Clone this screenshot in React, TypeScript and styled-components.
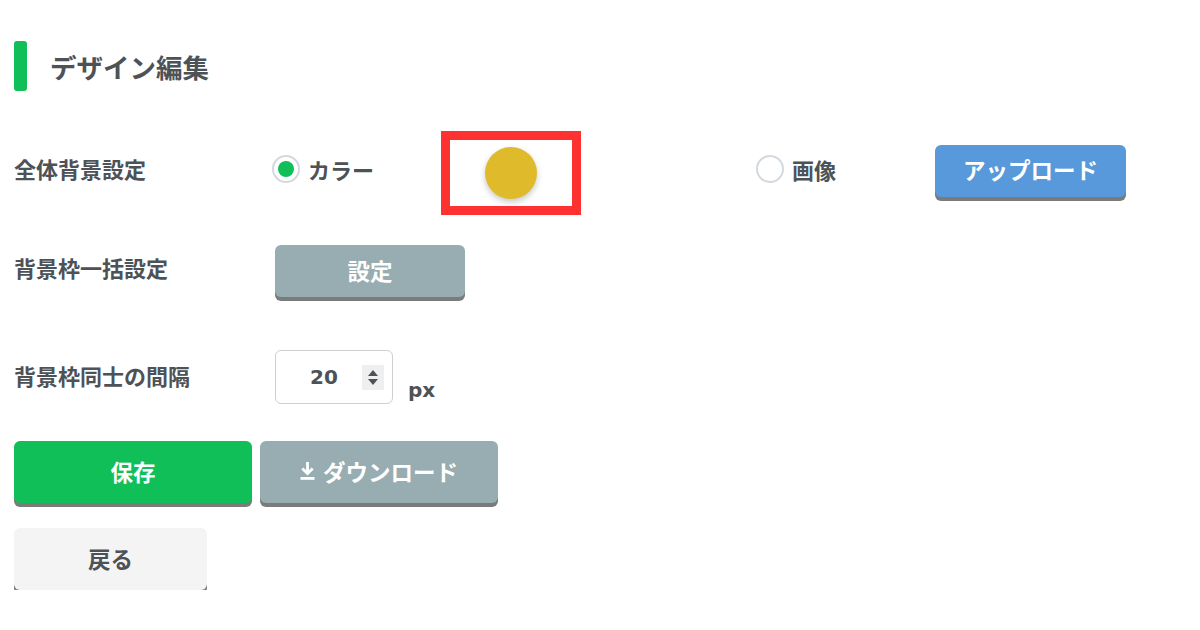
import styled, { createGlobalStyle } from "styled-components";
import { useState } from "react";

const GlobalStyle = createGlobalStyle`
  body {
    margin: 0;
    background: #ffffff;
    font-family: "DejaVu Sans", "Noto Sans CJK JP", sans-serif;
    color: #4d5257;
  }
`;

const Page = styled.div`
  padding: 41px 14px 0 14px;
`;

const Heading = styled.h2`
  display: flex;
  align-items: center;
  gap: 23px;
  margin: 0 0 35px 0;
  font-family: "Noto Sans CJK JP", sans-serif;
  font-size: 26.5px;
  font-weight: 700;
  color: #4d5257;
  height: 50px;

  &::before {
    content: "";
    width: 13px;
    height: 50px;
    border-radius: 3px;
    background: #10bf58;
  }
`;

const Row = styled.div<{ height: number }>`
  display: grid;
  grid-template-columns: 261px 1fr;
  align-items: center;
  height: ${({ height }) => height}px;
`;

const Label = styled.div`
  font-family: "Noto Sans CJK JP", sans-serif;
  font-size: 22px;
  font-weight: 700;
  color: #4d5257;
  padding-bottom: 5px;
`;

const OptionGrid = styled.div`
  display: grid;
  grid-template-columns: 169px 315px 179px auto;
  align-items: center;
  margin-left: -3px;
`;

const RadioLabel = styled.label`
  display: flex;
  align-items: center;
  gap: 8px;
  font-family: "Noto Sans CJK JP", sans-serif;
  font-size: 22px;
  font-weight: 700;
  padding-bottom: 4px;
  cursor: pointer;
`;

const HiddenRadio = styled.input.attrs({ type: "radio" })`
  display: none;
`;

const RadioCircle = styled.span<{ checked: boolean }>`
  width: 28px;
  height: 28px;
  box-sizing: border-box;
  border-radius: 50%;
  border: 2px solid #d3d9de;
  background: #fff;
  display: grid;
  place-items: center;

  &::after {
    content: "";
    width: 16px;
    height: 16px;
    border-radius: 50%;
    background: ${({ checked }) => (checked ? "#10bf58" : "transparent")};
  }
`;

const SwatchFrame = styled.div`
  width: 122px;
  height: 66px;
  margin-top: 5px;
  border: 9px solid #ff3232;
  display: grid;
  place-items: center;
`;

const Swatch = styled.div<{ color: string }>`
  width: 52px;
  height: 52px;
  border-radius: 50%;
  background: ${({ color }) => color};
  box-shadow: 0 3px 6px rgba(0, 0, 0, 0.22);
`;

const Button = styled.button<{ tone: "blue" | "gray" | "green" | "light"; w: number; h: number }>`
  width: ${({ w }) => w}px;
  height: ${({ h }) => h}px;
  border: none;
  border-radius: 6px;
  display: inline-flex;
  align-items: center;
  justify-content: center;
  gap: 8px;
  padding: 0 0 3px 0;
  font-family: "Noto Sans CJK JP", sans-serif;
  font-size: 22.5px;
  font-weight: 700;
  cursor: pointer;
  box-shadow: 0 4px 0 #7b7b7b;
  background: ${({ tone }) =>
    tone === "blue"
      ? "#5899db"
      : tone === "green"
      ? "#10bf58"
      : tone === "light"
      ? "#f4f4f4"
      : "#97adb1"};
  color: ${({ tone }) => (tone === "light" ? "#4d5257" : "#ffffff")};
`;

const ButtonCell = styled.div`
  padding-top: 4px;
`;

const NumberWrap = styled.div`
  display: flex;
  align-items: flex-end;
  gap: 15px;
`;

const NumberBox = styled.div`
  width: 118px;
  height: 54px;
  box-sizing: border-box;
  border: 1px solid #cfcfcf;
  border-radius: 6px;
  display: flex;
  align-items: center;
  padding: 0 8px 0 0;
`;

const NumberValue = styled.span`
  flex: 1;
  text-align: center;
  font-family: "DejaVu Sans", sans-serif;
  font-size: 20px;
  font-weight: 700;
  color: #4d5257;
  padding-left: 10px;
`;

const Spinner = styled.span`
  width: 22px;
  height: 25px;
  background: #efefef;
  display: flex;
  flex-direction: column;
  align-items: center;
  justify-content: center;
  gap: 3px;
`;

const Unit = styled.span`
  font-family: "DejaVu Sans", sans-serif;
  font-size: 20px;
  font-weight: 700;
  color: #4d5257;
  margin-bottom: 2px;
`;

const ActionRow = styled.div`
  display: flex;
  gap: 8px;
  margin-top: 19px;
`;

const BackRow = styled.div`
  margin-top: 25px;
`;

function DownloadIcon() {
  return (
    <svg width="15" height="19" viewBox="0 0 15 19" fill="none" stroke="currentColor" strokeWidth="2.8">
      <path d="M7.5 1 V12.5" />
      <path d="M2.3 7.6 L7.5 12.6 L12.7 7.6" strokeLinejoin="miter" />
      <path d="M0.5 17.4 H14.5" />
    </svg>
  );
}

export default function App() {
  const [mode, setMode] = useState<"color" | "image">("color");
  const [gap] = useState(20);

  return (
    <Page>
      <GlobalStyle />
      <Heading>デザイン編集</Heading>

      <Row height={80}>
        <Label>全体背景設定</Label>
        <OptionGrid>
          <RadioLabel>
            <HiddenRadio checked={mode === "color"} onChange={() => setMode("color")} />
            <RadioCircle checked={mode === "color"} />
            カラー
          </RadioLabel>
          <SwatchFrame>
            <Swatch color="#dfbb2b" />
          </SwatchFrame>
          <RadioLabel>
            <HiddenRadio checked={mode === "image"} onChange={() => setMode("image")} />
            <RadioCircle checked={mode === "image"} />
            画像
          </RadioLabel>
          <Button tone="blue" w={191} h={52}>
            アップロード
          </Button>
        </OptionGrid>
      </Row>

      <Row height={126}>
        <Label>背景枠一括設定</Label>
        <ButtonCell>
          <Button tone="gray" w={190} h={52}>
            設定
          </Button>
        </ButtonCell>
      </Row>

      <Row height={90}>
        <Label>背景枠同士の間隔</Label>
        <NumberWrap>
          <NumberBox>
            <NumberValue>{gap}</NumberValue>
            <Spinner>
              <svg width="10" height="6" viewBox="0 0 10 6">
                <path d="M5 0 L10 6 L0 6 Z" fill="#4d5257" />
              </svg>
              <svg width="10" height="6" viewBox="0 0 10 6">
                <path d="M0 0 L10 0 L5 6 Z" fill="#4d5257" />
              </svg>
            </Spinner>
          </NumberBox>
          <Unit>px</Unit>
        </NumberWrap>
      </Row>

      <ActionRow>
        <Button tone="green" w={238} h={62}>
          保存
        </Button>
        <Button tone="gray" w={238} h={62}>
          <DownloadIcon />
          ダウンロード
        </Button>
      </ActionRow>

      <BackRow>
        <Button tone="light" w={193} h={62}>
          戻る
        </Button>
      </BackRow>
    </Page>
  );
}
